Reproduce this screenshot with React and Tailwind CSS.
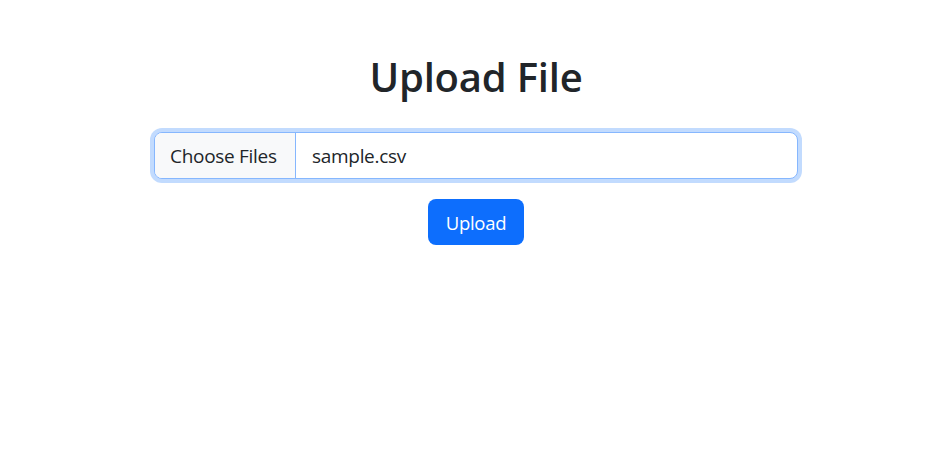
import React from "react";

const App = () => {
  return (
    <div className="min-h-screen w-full bg-white text-[#212529] font-['Open_Sans',sans-serif]">
      <div className="flex flex-col items-center pl-[9px] pt-[53px]">
        {/* Title */}
        <h1 className="text-[40px] leading-[1.2] font-semibold tracking-[-0.2px]">
          Upload File
        </h1>

        {/* File input (focused) */}
        <div className="mt-[31px] flex h-[47px] w-[644px] items-center overflow-hidden rounded-lg border border-[#86b7fe] bg-white shadow-[0_0_0_4px_rgba(13,110,253,0.25)]">
          <div className="flex h-full w-[141px] items-center border-r border-[#86b7fe] bg-[#f8f9fa] pl-[15px] pt-[2px] text-[19px] tracking-[-0.3px]">
            Choose Files
          </div>
          <span className="pl-[16px] pt-[2px] text-[19px] tracking-[-0.3px]">sample.csv</span>
        </div>

        {/* Upload button */}
        <button className="mt-[20px] flex h-[46px] w-[96px] items-center justify-center rounded-lg bg-[#0d6efd] pt-[2px] text-[18.5px] tracking-[-0.3px] text-white">
          Upload
        </button>
      </div>
    </div>
  );
};

export default App;
